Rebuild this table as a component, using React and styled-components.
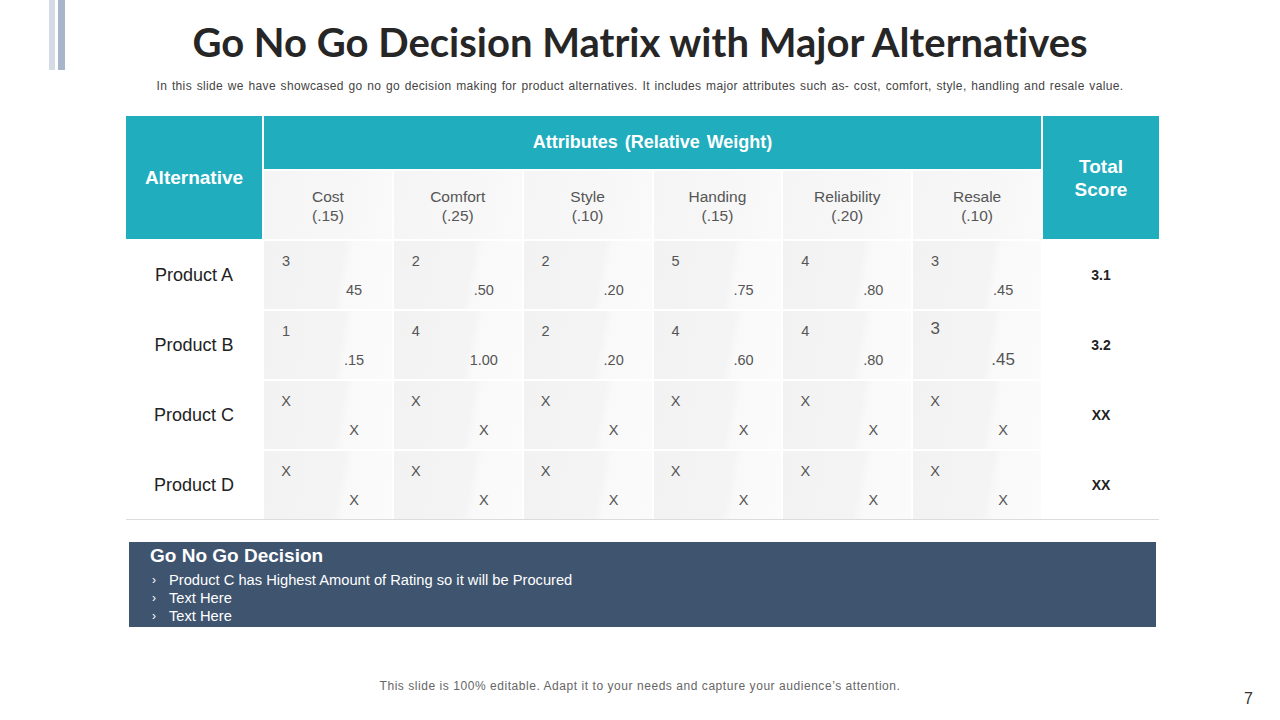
import React from "react";
import styled, { createGlobalStyle } from "styled-components";

const attributes = [
  { name: "Cost", weight: "(.15)" },
  { name: "Comfort", weight: "(.25)" },
  { name: "Style", weight: "(.10)" },
  { name: "Handing", weight: "(.15)" },
  { name: "Reliability", weight: "(.20)" },
  { name: "Resale", weight: "(.10)" },
];

const X6 = Array.from({ length: 6 }, () => ["X", "X"]);

const products = [
  {
    name: "Product A",
    total: "3.1",
    cells: [["3", "45"], ["2", ".50"], ["2", ".20"], ["5", ".75"], ["4", ".80"], ["3", ".45"]],
  },
  {
    name: "Product B",
    total: "3.2",
    cells: [["1", ".15"], ["4", "1.00"], ["2", ".20"], ["4", ".60"], ["4", ".80"], ["3", ".45", true]],
  },
  { name: "Product C", total: "XX", cells: X6 },
  { name: "Product D", total: "XX", cells: X6 },
];

const bullets = [
  "Product C has Highest Amount of Rating so it will be Procured",
  "Text Here",
  "Text Here",
];

const App = () => {
  return (
    <>
      <GlobalStyle />
      <Page>
        <Header>
          <Bars>
            <Bar />
            <Bar dark />
          </Bars>
          <Title>Go No Go Decision Matrix with Major Alternatives</Title>
          <div />
        </Header>
        <Subtitle>
          In this slide we have showcased go no go decision making for product alternatives. It
          includes major attributes such as- cost, comfort, style, handling and resale value.
        </Subtitle>

        <Matrix>
          <HeadCell>Alternative</HeadCell>
          <AttrHead>Attributes (Relative Weight)</AttrHead>
          <TotalHead>
            Total
            <br />
            Score
          </TotalHead>
          {attributes.map((a) => (
            <SubHead key={a.name}>
              {a.name}
              <br />
              {a.weight}
            </SubHead>
          ))}

          {products.map((p) => (
            <React.Fragment key={p.name}>
              <Label>{p.name}</Label>
              {p.cells.map(([top, bottom, big], i) => (
                <Cell key={i}>
                  <TopVal $big={big}>{top}</TopVal>
                  <BottomVal $big={big}>{bottom}</BottomVal>
                </Cell>
              ))}
              <Total>{p.total}</Total>
            </React.Fragment>
          ))}
        </Matrix>
        <Rule />

        <Decision>
          <DecisionTitle>Go No Go Decision</DecisionTitle>
          {bullets.map((b, i) => (
            <Bullet key={i}>
              <Arrow>›</Arrow>
              {b}
            </Bullet>
          ))}
        </Decision>

        <Footer>
          <div />
          <Note>This slide is 100% editable. Adapt it to your needs and capture your audience’s attention.</Note>
          <PageNum>7</PageNum>
        </Footer>
      </Page>
    </>
  );
};

export default App;

const GlobalStyle = createGlobalStyle`
  body {
    margin: 0;
    background: #fff;
  }
`;

const Page = styled.div`
  width: 1280px;
  height: 720px;
  overflow: hidden;
  background: #fff;
  font-family: "Liberation Sans", Arial, sans-serif;
`;

const Header = styled.div`
  display: grid;
  grid-template-columns: 1fr auto 1fr;
  height: 70px;
`;

const Bars = styled.div`
  display: flex;
  gap: 3px;
  padding-left: 49px;
`;

const Bar = styled.div`
  width: ${(p) => (p.dark ? "7px" : "6px")};
  height: 70px;
  background: ${(p) => (p.dark ? "#a9b5ca" : "#d5dbe5")};
`;

const Title = styled.h1`
  margin: 18px 0 0;
  font-family: Lato, "Open Sans", sans-serif;
  font-weight: 700;
  font-size: 40px;
  line-height: 48px;
  color: #262626;
  white-space: nowrap;
  font-variant-ligatures: none;
  font-feature-settings: "liga" 0;
`;

const Subtitle = styled.p`
  margin: 8px 0 0;
  text-align: center;
  font-size: 12px;
  line-height: 16px;
  color: #444;
  letter-spacing: 0.35px;
  word-spacing: 1px;
`;

const Matrix = styled.div`
  margin: 22px 0 0 126px;
  width: 1033px;
  display: grid;
  grid-template-columns: 136px repeat(6, 1fr) 116px;
  grid-template-rows: 53px 68px repeat(4, 68px);
  column-gap: 2px;
  row-gap: 2px;
`;

const HeadCell = styled.div`
  grid-row: 1 / span 2;
  background: #20adbd;
  color: #fff;
  font-weight: 700;
  font-size: 19px;
  display: flex;
  align-items: center;
  justify-content: center;
  text-align: center;
`;

const AttrHead = styled.div`
  grid-column: 2 / span 6;
  background: #20adbd;
  color: #fff;
  font-weight: 700;
  font-size: 18px;
  word-spacing: 2px;
  display: flex;
  align-items: center;
  justify-content: center;
`;

const TotalHead = styled(HeadCell)`
  grid-column: 8;
  line-height: 23px;
`;

const SubHead = styled.div`
  background: linear-gradient(100deg, #f5f5f5 0%, #f7f7f7 60%, #fafafa 100%);
  color: #555;
  font-size: 15.5px;
  line-height: 19px;
  display: flex;
  align-items: center;
  justify-content: center;
  text-align: center;
  padding-top: 1px;
`;

const Label = styled.div`
  display: flex;
  align-items: center;
  justify-content: center;
  font-size: 18px;
  color: #222;
`;

const Cell = styled.div`
  background: linear-gradient(
    100deg,
    #f2f2f2 0%,
    #f4f4f4 58%,
    #f9f9f9 64%,
    #fbfbfb 100%
  );
  display: flex;
  flex-direction: column;
  color: #555;
  font-size: 14.5px;
  line-height: 16px;
  padding-top: 12px;
`;

const TopVal = styled.div`
  width: 30px;
  margin-left: 7px;
  text-align: center;
  font-size: ${(p) => (p.$big ? "17px" : "14.5px")};
  line-height: ${(p) => (p.$big ? "18px" : "16px")};
  margin-top: ${(p) => (p.$big ? "-3px" : "0")};
`;

const BottomVal = styled.div`
  width: 60px;
  margin-left: 60px;
  margin-top: 13px;
  text-align: center;
  font-size: ${(p) => (p.$big ? "17px" : "14.5px")};
  line-height: ${(p) => (p.$big ? "18px" : "16px")};
`;

const Total = styled.div`
  display: flex;
  align-items: center;
  justify-content: center;
  font-size: 14px;
  font-weight: 700;
  color: #222;
`;

const Rule = styled.div`
  margin-left: 126px;
  width: 1033px;
  height: 1px;
  background: #dcdcdc;
`;

const Decision = styled.div`
  margin: 22px 0 0 129px;
  width: 1027px;
  height: 85px;
  box-sizing: border-box;
  padding: 4px 21px 0;
  background: #3e546f;
  color: #fff;
`;

const DecisionTitle = styled.div`
  font-size: 19px;
  font-weight: 700;
  line-height: 20px;
  margin-bottom: 5px;
`;

const Bullet = styled.div`
  display: flex;
  font-size: 14.7px;
  line-height: 18px;
`;

const Arrow = styled.span`
  width: 17px;
  padding-left: 2px;
  font-size: 12px;
`;

const Footer = styled.div`
  display: grid;
  grid-template-columns: 1fr auto 1fr;
  margin-top: 51px;
`;

const Note = styled.div`
  font-size: 12px;
  line-height: 16px;
  color: #666;
  letter-spacing: 0.55px;
`;

const PageNum = styled.div`
  justify-self: end;
  padding-right: 27px;
  margin-top: 12px;
  font-size: 16px;
  line-height: 18px;
  color: #333;
`;
